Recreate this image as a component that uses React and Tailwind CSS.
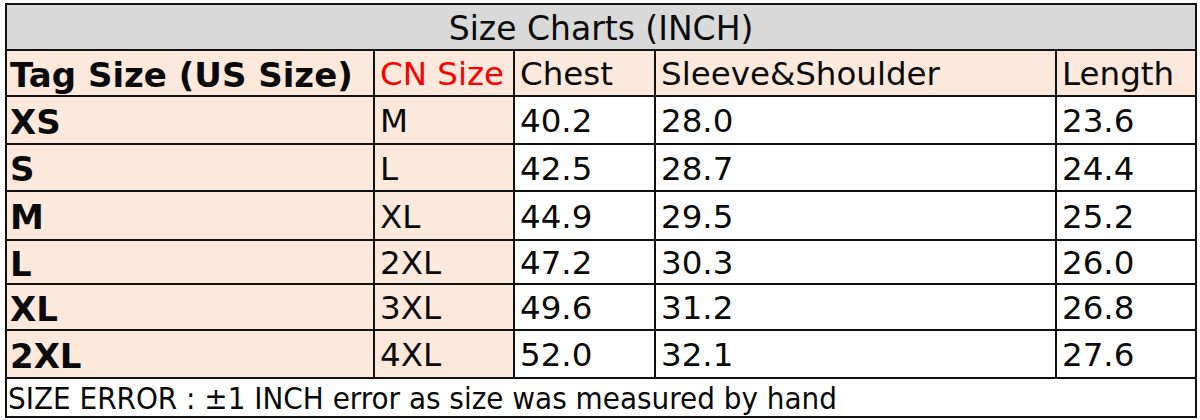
const ROWS = [
  { tag: 'XS', cn: 'M', chest: '40.2', sleeve: '28.0', length: '23.6', h: 'h-[48px]' },
  { tag: 'S', cn: 'L', chest: '42.5', sleeve: '28.7', length: '24.4', h: 'h-[47px]' },
  { tag: 'M', cn: 'XL', chest: '44.9', sleeve: '29.5', length: '25.2', h: 'h-[49px]' },
  { tag: 'L', cn: '2XL', chest: '47.2', sleeve: '30.3', length: '26.0', h: 'h-[44px]' },
  { tag: 'XL', cn: '3XL', chest: '49.6', sleeve: '31.2', length: '26.8', h: 'h-[46px]' },
  { tag: '2XL', cn: '4XL', chest: '52.0', sleeve: '32.1', length: '27.6', h: 'h-[48px]' },
]

const cell = 'border-2 border-[#111] px-[5px] pt-[3px] align-middle leading-none'

export default function App() {
  return (
    <div className="bg-white w-[1200px] h-[420px] pl-[5px] pt-[3px] font-['DejaVu_Sans',sans-serif] text-[#0a0a0a]">
      <table className="table-fixed border-collapse w-[1190px] text-[32.5px]">
        <colgroup>
          <col className="w-[368px]" />
          <col className="w-[140px]" />
          <col className="w-[141px]" />
          <col className="w-[401px]" />
          <col className="w-[140px]" />
        </colgroup>
        <tbody>
          {/* title */}
          <tr className="h-[46px]">
            <td colSpan={5} className={`${cell} bg-[#d9d9d9] text-center text-[33px]`}>
              Size Charts (INCH)
            </td>
          </tr>

          {/* header */}
          <tr className="h-[46px] bg-[#fce9dc]">
            <td className={`${cell} font-bold text-[34px] !px-[3px]`}>Tag Size (US Size)</td>
            <td className={`${cell} text-[#ff0000]`}>CN Size</td>
            <td className={cell}>Chest</td>
            <td className={cell}>Sleeve&amp;Shoulder</td>
            <td className={cell}>Length</td>
          </tr>

          {ROWS.map(r => (
            <tr key={r.tag} className={r.h}>
              <td className={`${cell} bg-[#fce9dc] font-bold text-[34px] !px-[3px]`}>{r.tag}</td>
              <td className={`${cell} bg-[#fce9dc]`}>{r.cn}</td>
              <td className={cell}>{r.chest}</td>
              <td className={cell}>{r.sleeve}</td>
              <td className={cell}>{r.length}</td>
            </tr>
          ))}

          {/* footer note */}
          <tr className="h-[39px]">
            <td colSpan={5} className={`${cell} !px-[1px] !pt-[1px] text-[31px] font-['DejaVu_Sans_Condensed','DejaVu_Sans',sans-serif]`}>
              SIZE ERROR : ±1 INCH error as size was measured by hand
            </td>
          </tr>
        </tbody>
      </table>
    </div>
  )
}
